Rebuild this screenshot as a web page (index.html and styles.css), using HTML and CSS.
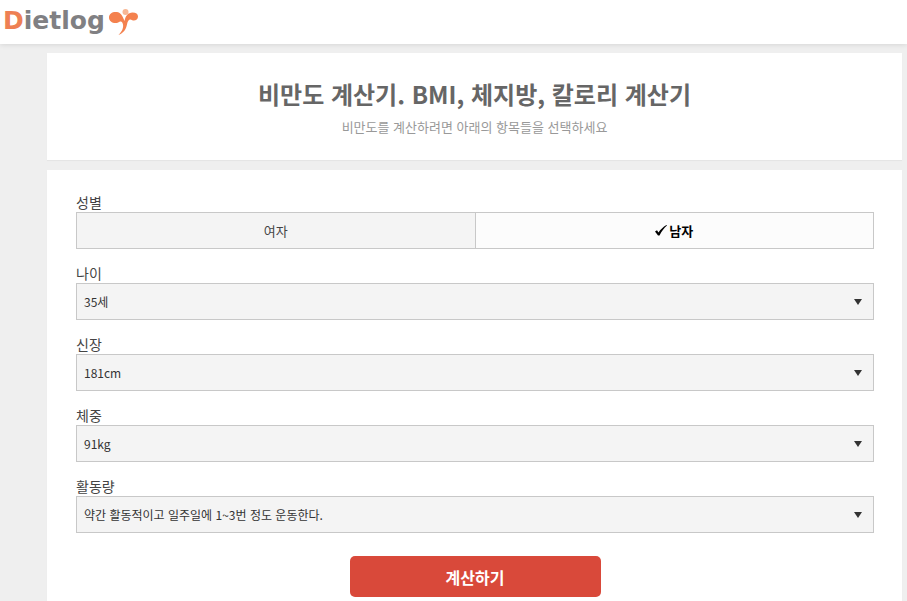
FILE: index.html
```
<!DOCTYPE html>
<html lang="ko">
<head>
    <meta charset="UTF-8" />
    <meta name="viewport" content="width=device-width, initial-scale=1" />
    <title>비만도 계산기 - Dietlog</title>
    <link rel="stylesheet" href="styles.css">
</head>
<body>
    <header class="header">
        <a class="logo" href="#">
            <span class="logo-text"><span class="logo-initial">D</span>ietlog</span>
            <svg class="logo-mark" width="30" height="28" viewBox="0 0 30 28" aria-hidden="true">
                <circle cx="16.500" cy="4" r="3" fill="#f8b795" />
                <path fill="#f4814e" d="M0 9.500C0 6 3 4 6.500 4c4 0 6 2 7.500 5.500L15.500 13c1-5 3.500-8.500 8-8.500 3.500 0 5.500 1.500 5.500 4 0 2.800-2.500 4.500-5 4-1-.2-1.500-1-2.500-1-2 0-3 2-3.500 5-1 5-3.500 8.500-8.500 10.500 4-4 5-7.500 4.500-10.500-.5-2.500-1.500-3.500-3-3-1 .8-2.500 1.500-4.500 1.500C3 15 0 13 0 9.500z" />
            </svg>
        </a>
    </header>

    <main class="page">
        <section class="card intro">
            <h1>비만도 계산기. BMI, 체지방, 칼로리 계산기</h1>
            <p>비만도를 계산하려면 아래의 항목들을 선택하세요</p>
        </section>

        <form class="card bmi-form">
            <fieldset class="field">
                <legend>성별</legend>
                <div class="gender">
                    <label class="gender-option">
                        <input type="radio" name="gender" value="female" />
                        <span>여자</span>
                    </label>
                    <label class="gender-option">
                        <input type="radio" name="gender" value="male" checked />
                        <svg class="check" width="12" height="12" viewBox="0 0 12 12" aria-hidden="true">
                            <path d="M0 6.500l2-1.200 1.500 2.200C5.500 4.500 8 2 11.500 0l.5.500C9 3 6.500 6.500 4.500 10.500H3z" />
                        </svg>
                        <span>남자</span>
                    </label>
                </div>
            </fieldset>

            <div class="field">
                <label for="age">나이</label>
                <div class="select-box">
                    <select id="age" name="age">
                        <option value="35">35세</option>
                    </select>
                </div>
            </div>

            <div class="field">
                <label for="height">신장</label>
                <div class="select-box">
                    <select id="height" name="height">
                        <option value="181">181cm</option>
                    </select>
                </div>
            </div>

            <div class="field">
                <label for="weight">체중</label>
                <div class="select-box">
                    <select id="weight" name="weight">
                        <option value="91">91kg</option>
                    </select>
                </div>
            </div>

            <div class="field">
                <label for="activity">활동량</label>
                <div class="select-box">
                    <select id="activity" name="activity">
                        <option value="light">약간 활동적이고 일주일에 1~3번 정도 운동한다.</option>
                    </select>
                </div>
            </div>

            <button type="submit">계산하기</button>
        </form>
    </main>
</body>
</html>
```
FILE: styles.css
```
* {
    box-sizing: border-box;
}
body {
    margin: 0;
    background: #efefef;
    color: #444;
    font-family: "Noto Sans CJK KR", sans-serif;
    font-size: 14px;
}
.header {
    height: 44px;
    padding: 0 3px;
    background: #fff;
    box-shadow: 0 1px 5px rgba(0, 0, 0, 0.1);
}
.logo {
    display: inline-flex;
    align-items: center;
    gap: 4px;
    height: 44px;
    text-decoration: none;
}
.logo-text {
    color: #808083;
    font-family: "DejaVu Sans", sans-serif;
    font-size: 25px;
    font-weight: bold;
    line-height: 40px;
    padding-bottom: 2px;
}
.logo-initial {
    color: #ee8054;
}
.page {
    padding: 9px 5px 10px 47px;
}
.card {
    background: #fff;
    margin-bottom: 10px;
    box-shadow: 0 1px 1px rgba(0, 0, 0, 0.04);
}
.intro {
    padding: 22px 29px;
    text-align: center;
}
.intro h1 {
    margin: 0;
    color: #666;
    font-size: 24px;
    line-height: 38px;
}
.intro p {
    margin: 3px 0 0;
    color: #999;
    font-size: 13px;
    line-height: 22px;
}
.bmi-form {
    padding: 24px 28px 24px 29px;
}
.field {
    margin: 0 0 16px;
    padding: 0;
    border: 0;
}
.field > label,
.field > legend {
    display: block;
    padding: 0 0 2px;
    line-height: 16px;
}
.gender {
    display: flex;
    height: 37px;
    border: 1px solid #c8c8c8;
}
.gender-option {
    position: relative;
    flex: 1;
    display: flex;
    justify-content: center;
    align-items: center;
    gap: 2px;
    background: #f4f4f4;
    font-size: 13px;
    cursor: pointer;
}
.gender-option + .gender-option {
    border-left: 1px solid #c8c8c8;
}
.gender-option:has(input:checked) {
    background: #fcfcfc;
    color: #000;
    font-weight: bold;
}
/* the whole half is the click target */
.gender-option input {
    position: absolute;
    inset: 0;
    width: 100%;
    height: 100%;
    margin: 0;
    opacity: 0;
    cursor: pointer;
}
.select-box {
    position: relative;
}
.select-box::after {
    content: "";
    position: absolute;
    right: 12px;
    top: 16px;
    border: 4px solid transparent;
    border-top: 6px solid #333;
    border-bottom: 0;
    pointer-events: none;
}
select {
    appearance: none;
    display: block;
    width: 100%;
    height: 37px;
    padding: 0 30px 0 7px;
    border: 1px solid #c8c8c8;
    border-radius: 0;
    background: #f4f4f4;
    color: #333;
    font-family: inherit;
    font-size: 12px;
}
button {
    display: block;
    width: 251px;
    height: 41px;
    margin: 23px auto 0;
    border: 0;
    border-radius: 5px;
    background: #d9493a;
    color: #fff;
    font-family: inherit;
    font-size: 16px;
    font-weight: bold;
    cursor: pointer;
}
```
